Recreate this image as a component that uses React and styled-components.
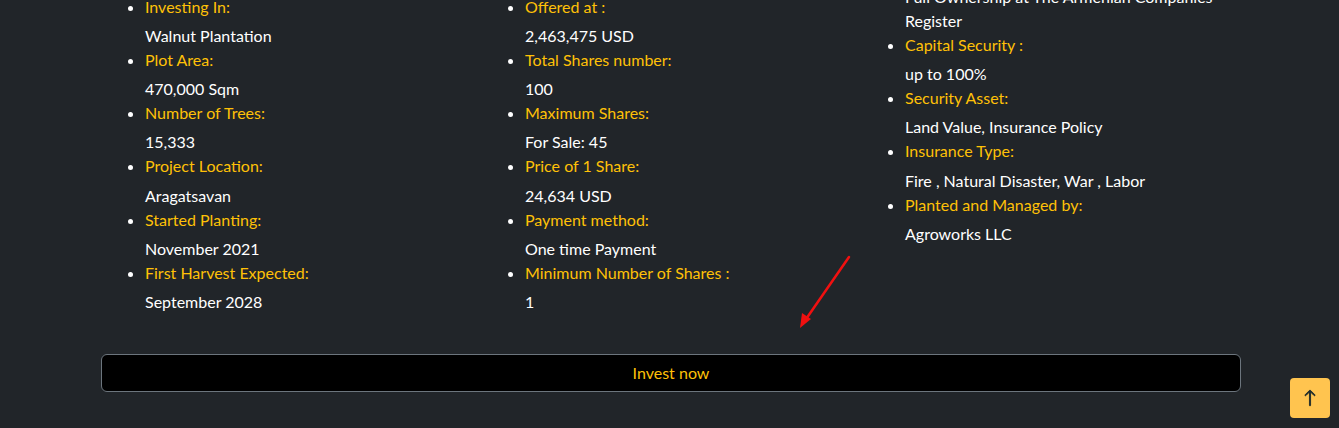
import styled, { createGlobalStyle } from "styled-components";
import { BsArrowUp } from "react-icons/bs";

const GlobalStyle = createGlobalStyle`
  html, body {
    margin: 0;
    padding: 0;
    background-color: #212529;
    font-family: Lato, "Open Sans", sans-serif;
    font-size: 16px;
    color: #fff;
    overflow: hidden;
  }
`;

const Page = styled.div`
  /* page is scrolled a little, top of the list is cut off */
  margin-top: -46px;
  height: 474px;
  position: relative;
`;

const Container = styled.div`
  width: 1140px;
  margin-left: 101px;
`;

const Row = styled.div`
  display: grid;
  grid-template-columns: repeat(3, 380px);
  align-items: start;
`;

const Col = styled.div`
  padding: 0 12px;
`;

const List = styled.ul`
  margin: ${(p) => p.$shift || 0}px 0 16px;
  padding-left: 32px;
  list-style: disc;
`;

const Item = styled.li`
  line-height: 24px;
`;

const Label = styled.span`
  display: block;
  color: #ffc107;
`;

const Value = styled.p`
  margin: 5.15px 0 0;
  color: #fff;
`;

const InvestButton = styled.button`
  display: block;
  width: 100%;
  margin-top: 24px;
  padding: 6px 12px;
  background: #000;
  color: #ffc107;
  border: 1px solid #6c757d;
  border-radius: 6px;
  font-family: Lato, "Open Sans", sans-serif;
  font-size: 16px;
  line-height: 24px;
  cursor: pointer;
`;

const BackToTop = styled.button`
  position: fixed;
  right: 9px;
  bottom: 10px;
  width: 40px;
  height: 40px;
  border: 0;
  border-radius: 4px;
  background: #ffc44f;
  color: #1d2a2a;
  display: flex;
  align-items: center;
  justify-content: center;
  padding: 0;
`;

const Annotation = styled.svg`
  position: absolute;
  left: 790px;
  top: 296px;
  pointer-events: none;
`;

const columns = [
  {
    shift: 41,
    items: [
      ["Investing In:", "Walnut Plantation"],
      ["Plot Area:", "470,000 Sqm"],
      ["Number of Trees:", "15,333"],
      ["Project Location:", "Aragatsavan"],
      ["Started Planting:", "November 2021"],
      ["First Harvest Expected:", "September 2028"],
    ],
  },
  {
    shift: 41,
    items: [
      ["Offered at :", "2,463,475 USD"],
      ["Total Shares number:", "100"],
      ["Maximum Shares:", "For Sale: 45"],
      ["Price of 1 Share:", "24,634 USD"],
      ["Payment method:", "One time Payment"],
      ["Minimum Number of Shares :", "1"],
    ],
  },
  {
    shift: 2,
    items: [
      ["Ownership Type:", "Full Ownership at The Armenian Companies Register"],
      ["Capital Security :", "up to 100%"],
      ["Security Asset:", "Land Value, Insurance Policy"],
      ["Insurance Type:", "Fire , Natural Disaster, War , Labor"],
      ["Planted and Managed by:", "Agroworks LLC"],
    ],
  },
];

export default function App() {
  return (
    <>
      <GlobalStyle />
      <Page>
        <Container>
          <Row>
            {columns.map((col, i) => (
              <Col key={i}>
                <List $shift={col.shift}>
                  {col.items.map(([label, value]) => (
                    <Item key={label}>
                      <Label>{label}</Label>
                      <Value>{value}</Value>
                    </Item>
                  ))}
                </List>
              </Col>
            ))}
          </Row>
          <InvestButton>Invest now</InvestButton>
        </Container>
        <Annotation width="70" height="90" viewBox="0 0 70 90">
          <line x1="59" y1="7" x2="14" y2="72" stroke="#f01010" strokeWidth="2.5" strokeLinecap="round" />
          <path d="M10 78 L12 63 L21 69 Z" fill="#f01010" />
        </Annotation>
      </Page>
      <BackToTop aria-label="Back to top">
        <BsArrowUp size={18} strokeWidth={0.8} />
      </BackToTop>
    </>
  );
}
